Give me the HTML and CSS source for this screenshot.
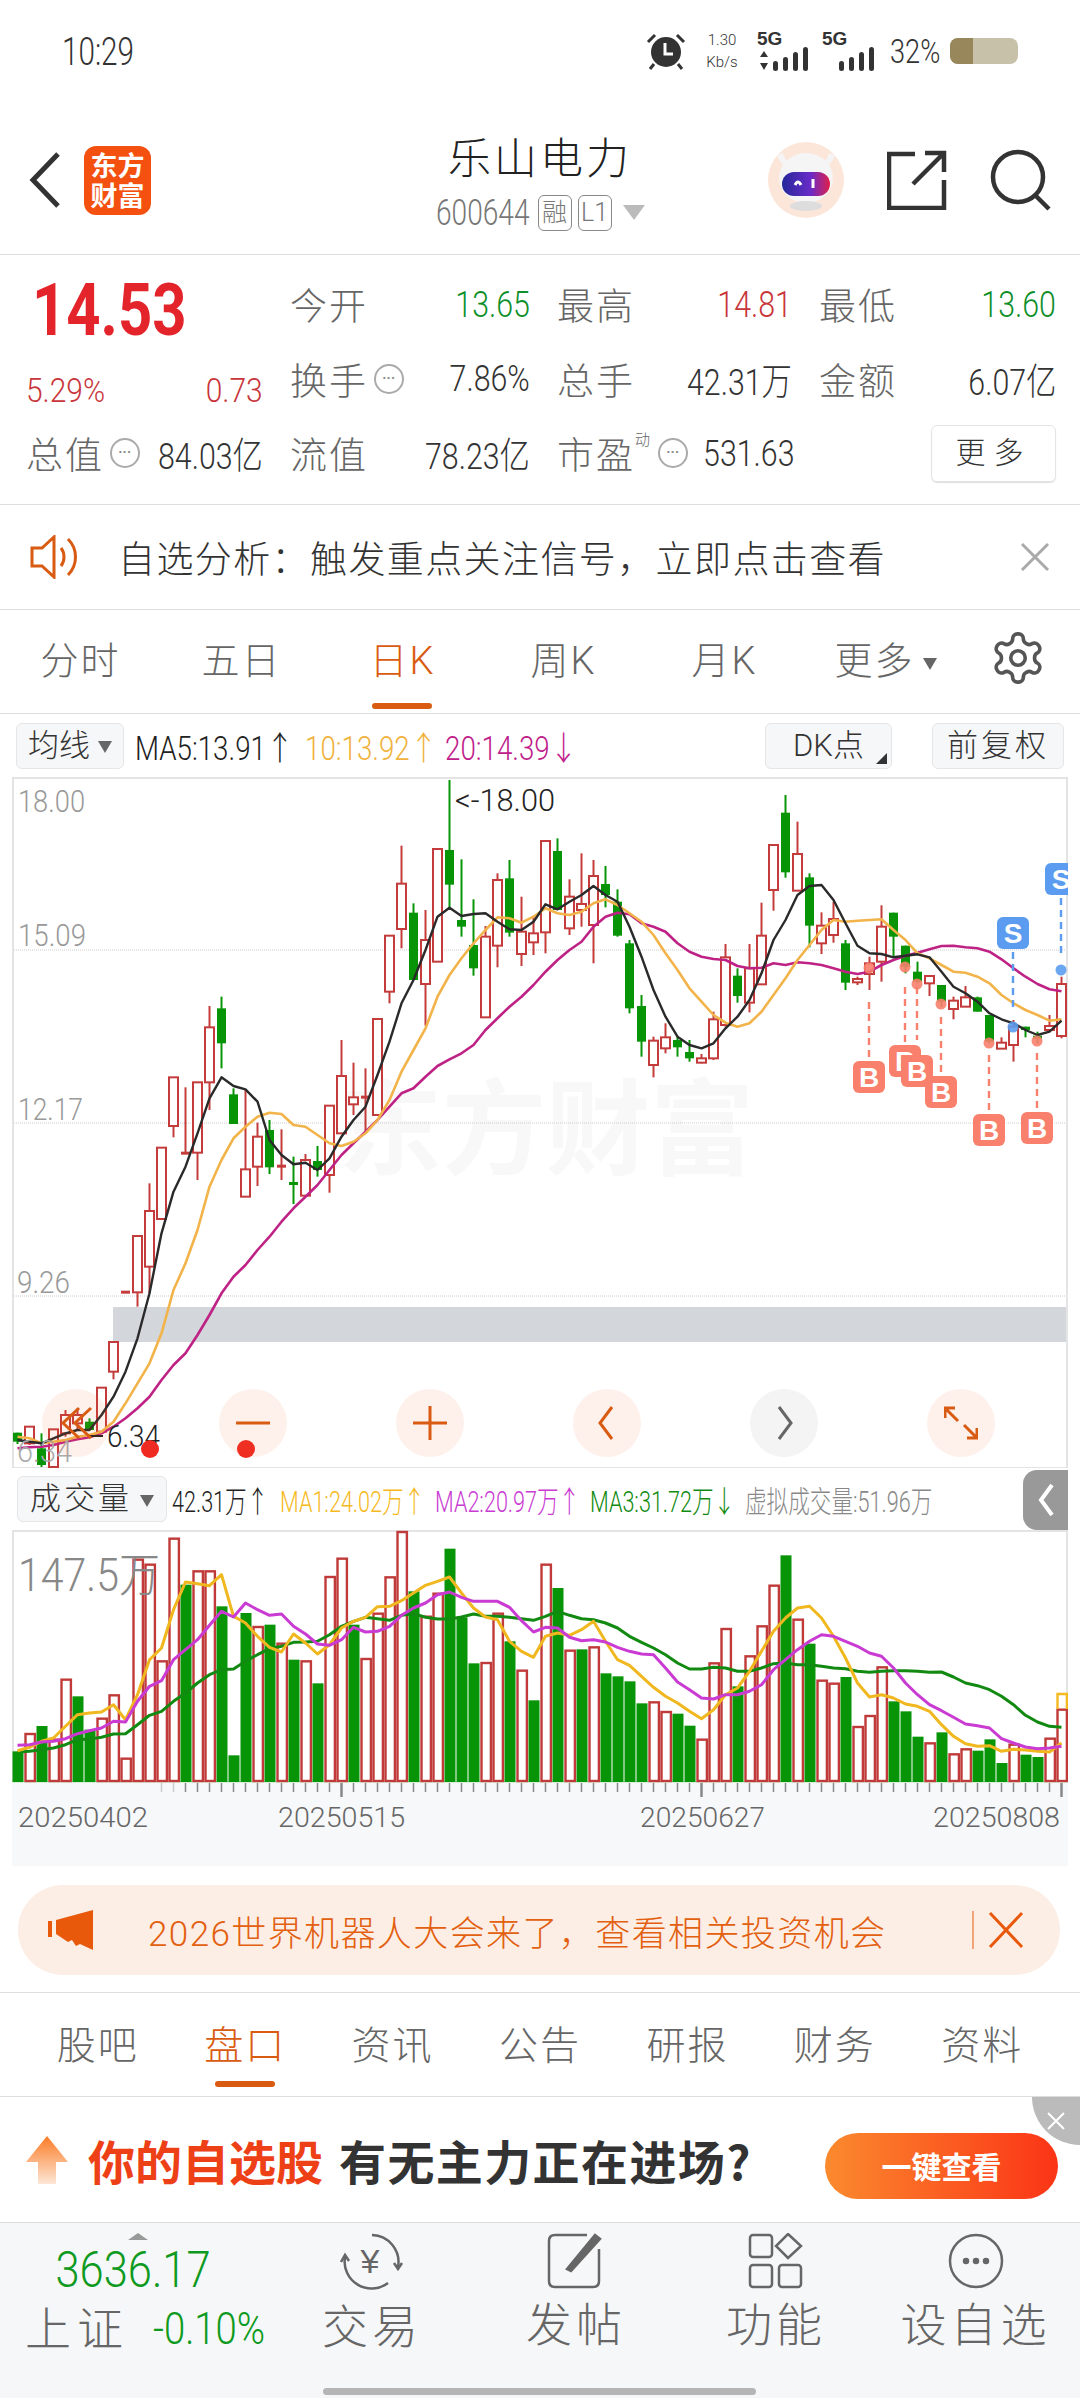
FILE: index.html
```html
<!DOCTYPE html>
<html>
<head>
    <title>乐山电力</title>
    <link rel="stylesheet" href="styles.css">
</head>
<body>
    <div class="status">
        <span class="clock">10:29</span>
        <div class="status-right">
            <svg class="alarm" width="40" height="38" viewBox="0 0 40 38">
                <path d="M2 10 L9 3 M38 10 L31 3" stroke="#333" stroke-width="3"/>
                <circle cx="20" cy="20" r="15" fill="#333"/>
                <path d="M19 11 V22 H27" stroke="#fff" stroke-width="3" fill="none"/>
                <path d="M8 32 L4 37 M32 32 L36 37" stroke="#333" stroke-width="3"/>
            </svg>
            <div class="speed"><span>1.30</span><span>Kb/s</span></div>
            <div class="net">
                <b>5G</b>
                <svg width="54" height="26" viewBox="0 0 54 26">
                    <path d="M5 5 L9 11 H1 Z M5 24 L1 17 H9 Z" fill="#333"/>
                    <rect x="14" y="15" width="5" height="10" rx="2.5" fill="#333"/>
                    <rect x="24" y="11" width="5" height="14" rx="2.5" fill="#333"/>
                    <rect x="34" y="6" width="5" height="19" rx="2.5" fill="#333"/>
                    <rect x="44" y="1" width="5" height="24" rx="2.5" fill="#333"/>
                </svg>
            </div>
            <div class="net net2">
                <b>5G</b>
                <svg width="42" height="26" viewBox="0 0 42 26">
                    <rect x="1" y="15" width="5" height="10" rx="2.5" fill="#333"/>
                    <rect x="11" y="11" width="5" height="14" rx="2.5" fill="#333"/>
                    <rect x="21" y="6" width="5" height="19" rx="2.5" fill="#333"/>
                    <rect x="31" y="1" width="5" height="24" rx="2.5" fill="#333"/>
                </svg>
            </div>
            <span class="batt-num">32%</span>
            <div class="battery"><div class="battery-fill"></div></div>
        </div>
    </div>

    <div class="header">
        <div class="header-left">
            <svg width="34" height="58" viewBox="0 0 34 58"><path d="M30 3 L5 29 L30 55" fill="none" stroke="#333" stroke-width="5"/></svg>
            <div class="logo">东方<br>财富</div>
        </div>
        <div class="header-mid">
            <div class="stock-name">乐山电力</div>
            <div class="stock-sub">
                <span class="stock-code">600644</span>
                <span class="chip">融</span>
                <span class="chip">L1</span>
                <span class="sub-arrow"></span>
            </div>
        </div>
        <div class="header-right">
            <svg class="avatar" width="76" height="76" viewBox="0 0 76 76">
                <circle cx="38" cy="38" r="38" fill="#fce6da"/>
                <path d="M12 12 C16 24 22 24 28 20 M64 12 C60 24 54 24 48 20" stroke="#f4f4f4" stroke-width="6" fill="none"/>
                <ellipse cx="38" cy="36" rx="27" ry="25" fill="#f5f5f5"/>
                <ellipse cx="38" cy="64" rx="16" ry="5" fill="#ddd"/>
                <rect x="14" y="30" width="48" height="24" rx="12" fill="url(#visor)"/>
                <path d="M27 43 q3 -6 6 0 M45 46 V37" stroke="#fff" stroke-width="3" fill="none"/>
                <defs><linearGradient id="visor"><stop offset="0" stop-color="#26289a"/><stop offset="0.6" stop-color="#6a2bc8"/><stop offset="1" stop-color="#e0204a"/></linearGradient></defs>
            </svg>
            <svg width="60" height="60" viewBox="0 0 60 60" fill="none" stroke="#333" stroke-width="4.5">
                <path d="M28 4 H2 V58 H57 V30"/>
                <path d="M26 34 L57 3 M38 3 H57 V22"/>
            </svg>
            <svg width="62" height="62" viewBox="0 0 62 62" fill="none" stroke="#333" stroke-width="4.5">
                <circle cx="28" cy="28" r="25"/>
                <path d="M45 46 L59 60"/>
            </svg>
        </div>
    </div>

    <div class="quote">
        <div class="price-box">
            <div class="price">14.53</div>
        </div>
        <div class="cell"><span class="label">今开</span><span class="val green">13.65</span></div>
        <div class="cell"><span class="label">最高</span><span class="val red">14.81</span></div>
        <div class="cell"><span class="label">最低</span><span class="val green">13.60</span></div>
        <div class="cell change"><span class="val">5.29%</span><span class="val">0.73</span></div>
        <div class="cell"><span class="label">换手<i class="dots">···</i></span><span class="val">7.86%</span></div>
        <div class="cell"><span class="label">总手</span><span class="val">42.31万</span></div>
        <div class="cell"><span class="label">金额</span><span class="val">6.07亿</span></div>
        <div class="cell"><span class="label">总值<i class="dots">···</i></span><span class="val">84.03亿</span></div>
        <div class="cell"><span class="label">流值</span><span class="val">78.23亿</span></div>
        <div class="cell cell-pe"><span class="label">市盈<sup class="dyn">动</sup><i class="dots">···</i></span><span class="val">531.63</span></div>
        <div class="cell more-cell"><span class="more">更多</span></div>
    </div>

    <div class="notice">
        <svg width="50" height="44" viewBox="0 0 50 44" fill="none" stroke="#d95b12" stroke-width="3">
            <path d="M2 13 H12 L24 2 V42 L12 31 H2 Z"/>
            <path d="M31 13 C35 18 35 26 31 31 M38 4 C48 14 48 30 38 40"/>
        </svg>
        <span class="notice-text">自选分析：触发重点关注信号，立即点击查看</span>
        <svg width="30" height="30" viewBox="0 0 30 30"><path d="M2 2 L28 28 M28 2 L2 28" stroke="#aaa" stroke-width="3"/></svg>
    </div>

    <div class="tabs">
        <span class="tab">分时</span>
        <span class="tab">五日</span>
        <span class="tab active">日K</span>
        <span class="tab">周K</span>
        <span class="tab">月K</span>
        <span class="tab">更多<i class="tri"></i></span>
        <svg class="gear" width="58" height="58" viewBox="0 0 24 24" fill="none" stroke="#555" stroke-width="1.5">
            <path d="M12.22 2h-.44a2 2 0 0 0-2 2v.18a2 2 0 0 1-1 1.73l-.43.25a2 2 0 0 1-2 0l-.15-.08a2 2 0 0 0-2.73.73l-.22.38a2 2 0 0 0 .73 2.73l.15.1a2 2 0 0 1 1 1.72v.51a2 2 0 0 1-1 1.74l-.15.09a2 2 0 0 0-.73 2.73l.22.38a2 2 0 0 0 2.73.73l.15-.08a2 2 0 0 1 2 0l.43.25a2 2 0 0 1 1 1.73V20a2 2 0 0 0 2 2h.44a2 2 0 0 0 2-2v-.18a2 2 0 0 1 1-1.73l.43-.25a2 2 0 0 1 2 0l.15.08a2 2 0 0 0 2.73-.73l.22-.39a2 2 0 0 0-.73-2.73l-.15-.08a2 2 0 0 1-1-1.74v-.5a2 2 0 0 1 1-1.74l.15-.09a2 2 0 0 0 .73-2.73l-.22-.38a2 2 0 0 0-2.73-.73l-.15.08a2 2 0 0 1-2 0l-.43-.25a2 2 0 0 1-1-1.73V4a2 2 0 0 0-2-2z"/>
            <circle cx="12" cy="12" r="3"/>
        </svg>
    </div>

    <div class="kbar">
        <span class="pick">均线<i class="tri"></i></span>
        <span class="ma ma5">MA5:13.91↑</span>
        <span class="ma ma10">10:13.92↑</span>
        <span class="ma ma20">20:14.39↓</span>
        <span class="pick dk">DK点<i class="corner"></i></span>
        <span class="pick fq">前复权</span>
    </div>

    <div class="chart">
        <div class="watermark">东方财富</div>
        <svg id="kline" class="kline" width="1056" height="691" viewBox="12 777 1056 691"></svg>
        <div class="float-row">
            <span class="fbtn"><svg width="34" height="34" viewBox="0 0 34 34" fill="none" stroke="#d95b12" stroke-width="3"><path d="M20 2 L4 17 L20 32 M32 2 L16 17 L32 32"/></svg></span>
            <span class="fbtn"><svg width="34" height="34" viewBox="0 0 34 34" stroke="#d95b12" stroke-width="3"><path d="M0 17 H34"/></svg></span>
            <span class="fbtn"><svg width="34" height="34" viewBox="0 0 34 34" stroke="#d95b12" stroke-width="3"><path d="M0 17 H34 M17 0 V34"/></svg></span>
            <span class="fbtn"><svg width="34" height="34" viewBox="0 0 34 34" fill="none" stroke="#d95b12" stroke-width="3"><path d="M22 1 L10 17 L22 33"/></svg></span>
            <span class="fbtn fbtn-off"><svg width="34" height="34" viewBox="0 0 34 34" fill="none" stroke="#666" stroke-width="3"><path d="M12 1 L24 17 L12 33"/></svg></span>
            <span class="fbtn"><svg width="34" height="34" viewBox="0 0 34 34" fill="none" stroke="#d95b12" stroke-width="3"><path d="M1 12 V2 H11 M2 3 L14 15 M33 22 V32 H23 M32 31 L20 19"/></svg></span>
        </div>
    </div>

    <div class="vbar">
        <span class="pick vpick">成交量<i class="tri"></i></span>
        <span class="ma vol0">42.31万↑</span>
        <span class="ma va1">MA1:24.02万↑</span>
        <span class="ma va2">MA2:20.97万↑</span>
        <span class="ma va3">MA3:31.72万↓</span>
        <span class="ma va4">虚拟成交量:51.96万</span>
        <span class="side-tab"><svg width="18" height="34" viewBox="0 0 18 34" fill="none" stroke="#fff" stroke-width="4"><path d="M15 2 L4 17 L15 32"/></svg></span>
    </div>

    <svg id="volume" class="volume" width="1056" height="336" viewBox="12 1532 1056 336"></svg>

    <div class="banner">
        <svg width="46" height="40" viewBox="0 0 46 40" fill="#e8590c">
            <rect x="0" y="11" width="4" height="16"/>
            <path d="M8 10 L45 0 V40 L32 34 L28 36 L24 30 L20 32 L8 24 Z"/>
        </svg>
        <span class="banner-text">2026世界机器人大会来了，查看相关投资机会</span>
        <svg class="banner-x" width="52" height="38" viewBox="0 0 52 38" stroke="#e8590c">
            <path d="M1 0 V38" stroke-width="1"/>
            <path d="M18 2 L50 36 M50 2 L18 36" stroke-width="3"/>
        </svg>
    </div>

    <div class="subtabs">
        <span class="subtab">股吧</span>
        <span class="subtab active">盘口</span>
        <span class="subtab">资讯</span>
        <span class="subtab">公告</span>
        <span class="subtab">研报</span>
        <span class="subtab">财务</span>
        <span class="subtab">资料</span>
    </div>

    <div class="ad">
        <svg width="42" height="48" viewBox="0 0 42 48">
            <defs><linearGradient id="up" x1="0" y1="0" x2="0" y2="1"><stop offset="0" stop-color="#fb7b25"/><stop offset="1" stop-color="#fde7d6"/></linearGradient></defs>
            <path d="M21 0 L42 26 H30 V48 H12 V26 H0 Z" fill="url(#up)"/>
        </svg>
        <span class="ad-red">你的自选股</span>
        <span class="ad-dark">有无主力正在进场?</span>
        <span class="ad-btn">一键查看</span>
        <span class="ad-close"><svg width="20" height="20" viewBox="0 0 20 20"><path d="M2 2 L18 18 M18 2 L2 18" stroke="#fff" stroke-width="2"/></svg></span>
    </div>

    <div class="nav">
        <div class="index">
            <i class="index-caret"></i>
            <div class="index-num">3636.17</div>
            <div class="index-row"><span>上证</span><b>-0.10%</b></div>
        </div>
        <div class="nav-item">
            <svg width="68" height="58" viewBox="0 0 68 58" fill="none" stroke="#666" stroke-width="2.5">
                <path d="M34 2 A27 27 0 0 1 60 34 M50 50 A27 27 0 0 1 7 24"/>
                <path d="M3 29 L7 22 L11 28 M56 30 L60 36 L64 30"/>
                <text x="34" y="40" class="yen">¥</text>
            </svg>
            <span>交易</span>
        </div>
        <div class="nav-item">
            <svg width="58" height="56" viewBox="0 0 58 56" fill="none" stroke="#666" stroke-width="2.5">
                <path d="M40 2 H8 Q2 2 2 8 V48 Q2 54 8 54 H46 Q52 54 52 48 V16"/>
                <path d="M20 36 L48 2 L53 6 L24 38 Z" fill="#666"/>
            </svg>
            <span>发帖</span>
        </div>
        <div class="nav-item">
            <svg width="56" height="56" viewBox="0 0 56 56" fill="none" stroke="#666" stroke-width="2.5">
                <rect x="2" y="2" width="22" height="22" rx="3"/>
                <path d="M40 1 L53 13 L40 25 L28 13 Z"/>
                <rect x="2" y="32" width="22" height="22" rx="3"/>
                <rect x="31" y="32" width="22" height="22" rx="3"/>
            </svg>
            <span>功能</span>
        </div>
        <div class="nav-item">
            <svg width="56" height="56" viewBox="0 0 56 56" fill="none" stroke="#666" stroke-width="2.5">
                <circle cx="28" cy="28" r="26"/>
                <circle cx="18" cy="28" r="2" fill="#666"/>
                <circle cx="28" cy="28" r="2" fill="#666"/>
                <circle cx="38" cy="28" r="2" fill="#666"/>
            </svg>
            <span>设自选</span>
        </div>
        <div class="home-pill"></div>
    </div>

    <script src="chart.js"></script>
</body>
</html>
```
FILE: styles.css
```css
body {
    margin: 0;
    width: 1080px;
    height: 2400px;
    overflow: hidden;
    background-color: #fff;
    color: #333;
    font-family: Roboto, "Noto Sans CJK SC", sans-serif;
    font-size: 37px;
    font-weight: 300;
}
i {
    font-style: normal;
}
.red { color: #c8353a; }
.green { color: #0e8f2a; }

/* status bar */
.status {
    height: 110px;
    display: flex;
    justify-content: space-between;
    align-items: center;
    padding: 0 62px;
    box-sizing: border-box;
}
.clock {
    font-size: 38px;
    margin-top: -6px;
    transform: scaleX(0.78);
    transform-origin: left center;
}
.status-right {
    display: flex;
    align-items: center;
    margin-top: -8px;
}
.speed {
    display: flex;
    flex-direction: column;
    gap: 4px;
    font-size: 15px;
    margin-left: 20px;
    width: 32px;
    text-align: center;
}
.net {
    margin-left: 21px;
    position: relative;
    width: 54px;
    height: 38px;
}
.net b {
    position: absolute;
    left: -2px;
    top: -4px;
    font-size: 19px;
    font-family: "Liberation Sans", sans-serif;
    font-weight: bold;
}
.net svg {
    position: absolute;
    left: 0;
    bottom: -2px;
}
.net2 {
    margin-left: 11px;
}
.net2 svg {
    left: 14px;
}
.batt-num {
    width: 50px;
    font-size: 34px;
    margin-left: 12px;
    white-space: nowrap;
    transform: scaleX(0.8);
    transform-origin: left center;
}
.battery {
    width: 68px;
    height: 26px;
    margin-left: 10px;
    border-radius: 8px;
    background-color: #c8c1aa;
    overflow: hidden;
}
.battery-fill {
    width: 23px;
    height: 100%;
    background-color: #98875a;
}

/* header */
.header {
    height: 145px;
    display: grid;
    grid-template-columns: 1fr auto 1fr;
    align-items: center;
    padding: 0 28px;
    border-bottom: 1px solid #ddd;
    box-sizing: border-box;
}
.header-left {
    display: flex;
    align-items: center;
    gap: 22px;
    margin-top: -4px;
}
.logo {
    width: 67px;
    height: 69px;
    border-radius: 12px;
    background-color: #f4500f;
    color: #fff;
    font-family: "Noto Sans CJK SC", sans-serif;
    font-weight: bold;
    font-size: 27px;
    line-height: 30px;
    text-align: center;
    padding-top: 4px;
    box-sizing: border-box;
}
.header-mid {
    display: flex;
    flex-direction: column;
    align-items: center;
    gap: 11px;
}
.stock-name {
    font-size: 43px;
    line-height: 50px;
    letter-spacing: 3px;
    color: #222;
}
.stock-sub {
    display: flex;
    align-items: center;
    gap: 6px;
    color: #777;
    font-size: 36px;
    line-height: 36px;
}
.stock-code {
    width: 96px;
    transform: scaleX(0.78);
    transform-origin: left center;
}
.chip {
    width: 32px;
    height: 34px;
    border: 1px solid #888;
    border-radius: 6px;
    font-size: 25px;
    line-height: 33px;
    text-align: center;
}
.sub-arrow {
    width: 0;
    height: 0;
    margin-left: 5px;
    border-left: 11px solid transparent;
    border-right: 11px solid transparent;
    border-top: 15px solid #bbb;
}
.header-right {
    display: flex;
    justify-content: flex-end;
    align-items: center;
    gap: 43px;
    margin-top: -4px;
}

/* quote grid */
.quote {
    height: 250px;
    display: grid;
    grid-template-columns: 237px 240px 235px 237px;
    grid-auto-rows: 74.5px;
    column-gap: 27px;
    padding: 12px 24px 0 26px;
    border-bottom: 1px solid #ddd;
    box-sizing: border-box;
    color: #333;
}
.price-box {
    display: flex;
    align-items: center;
}
.price {
    font-size: 72px;
    font-weight: bold;
    color: #e3242b;
    margin-top: 12px;
    margin-left: 6px;
    transform: scaleX(0.83);
    transform-origin: left center;
}
.cell {
    display: flex;
    justify-content: space-between;
    align-items: center;
    white-space: nowrap;
}
.val {
    flex: none;
    margin-left: -40px;
    transform: scaleX(0.82);
    transform-origin: right center;
}
.label {
    flex: none;
    display: flex;
    align-items: center;
    color: #666;
    font-size: 37px;
    letter-spacing: 2px;
}
.change {
    color: #c8353a;
    font-size: 34px;
    align-items: flex-end;
    padding-bottom: 6px;
    box-sizing: border-box;
}
.change .val {
    margin-left: 0;
    transform: scaleX(0.88);
}
.change .val:first-child {
    transform-origin: left center;
}
.cell-pe .val {
    margin-right: -2px;
}
.dots {
    flex: none;
    width: 26px;
    height: 26px;
    margin-left: 6px;
    border: 2px solid #aaa;
    border-radius: 50%;
    color: #888;
    font-size: 13px;
    line-height: 24px;
    letter-spacing: 0;
    text-align: center;
    font-family: "Liberation Sans", sans-serif;
    font-weight: bold;
}
.dyn {
    font-size: 15px;
    line-height: 1;
    margin-bottom: 26px;
}
.more-cell {
    justify-content: flex-end;
}
.more {
    width: 123px;
    height: 55px;
    border: 1px solid #e4e4e4;
    border-radius: 6px;
    box-shadow: 0 1px 1px #ddd;
    text-align: center;
    font-size: 30px;
    line-height: 53px;
    letter-spacing: 8px;
}

/* notice row */
.notice {
    height: 105px;
    display: flex;
    align-items: center;
    padding: 0 30px;
    border-bottom: 1px solid #ddd;
    box-sizing: border-box;
}
.notice-text {
    flex: 1;
    margin-left: 38px;
    font-size: 37px;
    letter-spacing: 1.4px;
    color: #333;
}

/* period tabs */
.tabs {
    height: 104px;
    display: grid;
    grid-template-columns: repeat(6, 161px) 1fr;
    align-items: center;
    border-bottom: 1px solid #ddd;
    box-sizing: border-box;
    color: #666;
}
.tab {
    position: relative;
    text-align: center;
    font-size: 38px;
    letter-spacing: 2px;
    margin-top: -8px;
}
.tab.active {
    color: #d95b12;
}
.tab.active::after {
    content: "";
    position: absolute;
    left: 50px;
    bottom: -24px;
    width: 60px;
    height: 6px;
    border-radius: 3px;
    background-color: #d95b12;
}
.tri {
    display: inline-block;
    width: 0;
    height: 0;
    margin-left: 8px;
    vertical-align: middle;
    border-left: 7px solid transparent;
    border-right: 7px solid transparent;
    border-top: 12px solid #666;
}
.gear {
    margin-left: 23px;
    margin-top: -8px;
}

/* ma toolbars */
.kbar {
    height: 63px;
    display: flex;
    align-items: center;
    padding: 0 16px;
    box-sizing: border-box;
}
.pick {
    flex: none;
    box-sizing: border-box;
    height: 46px;
    border: 1px solid #e6e6e6;
    border-radius: 6px;
    background-color: #f6f7f9;
    color: #333;
    font-size: 31px;
    line-height: 44px;
    text-align: center;
}
.kbar .pick:first-child {
    width: 108px;
}
.ma {
    flex: none;
    font-size: 33px;
    white-space: nowrap;
    transform: scaleX(0.84);
    transform-origin: left center;
}
.ma5 { color: #222; width: 170px; margin-left: 11px; }
.ma10 { color: #f0b23c; width: 140px; }
.ma20 { color: #c0208a; width: 140px; }
.dk {
    position: relative;
    width: 127px;
    margin-left: auto;
}
.corner {
    position: absolute;
    right: 4px;
    bottom: 4px;
    border-left: 11px solid transparent;
    border-bottom: 11px solid #333;
}
.fq {
    width: 132px;
    margin-left: 40px;
    letter-spacing: 3px;
}

/* kline */
.chart {
    position: relative;
    width: 1056px;
    height: 692px;
    margin-left: 12px;
}
.kline {
    display: block;
    position: relative;
}
.watermark {
    position: absolute;
    left: 326px;
    top: 285px;
    font-family: "Noto Sans CJK SC", sans-serif;
    font-size: 104px;
    font-weight: bold;
    line-height: 120px;
    color: #f8f8f8;
}
.float-row {
    position: absolute;
    left: 30px;
    top: 612px;
    display: flex;
    gap: 109px;
}
.fbtn {
    width: 68px;
    height: 68px;
    border-radius: 50%;
    background-color: rgba(240, 100, 30, 0.09);
    display: flex;
    align-items: center;
    justify-content: center;
}
.fbtn-off {
    background-color: #f4f4f4;
}
.kline .axis { font-size: 32px; fill: #999; }
.kline .axis-low { fill: #aaa; }
.kline .note { font-size: 32px; fill: #222; }
.tag {
    font-family: "Liberation Sans", sans-serif;
    font-size: 28px;
    font-weight: bold;
    fill: #fff;
    text-anchor: middle;
}

/* volume */
.vbar {
    position: relative;
    height: 62px;
    display: flex;
    align-items: center;
    padding: 0 0 0 17px;
    box-sizing: border-box;
    margin-top: -1px;
}
.vbar .ma {
    font-size: 30px;
    transform: scaleX(0.72);
}
.vpick {
    width: 150px;
    letter-spacing: 3px;
}
.vol0 { color: #222; width: 108px; margin-left: 5px; }
.va1 { color: #f5b921; width: 155px; }
.va2 { color: #c93bd2; width: 155px; }
.va3 { color: #108a10; width: 155px; }
.va4 { color: #888; width: 200px; }
.side-tab {
    position: absolute;
    right: 12px;
    top: 2px;
    width: 45px;
    height: 60px;
    border-radius: 14px 0 0 14px;
    background-color: #999;
    display: flex;
    align-items: center;
    justify-content: center;
}
.volume {
    display: block;
    margin-left: 12px;
}
.volume .vlabel { font-size: 46px; fill: #888; }
.volume .date { font-size: 28px; fill: #666; }

/* orange banner */
.banner {
    height: 90px;
    margin: 19px 20px 17px 18px;
    padding: 0 30px;
    border-radius: 45px;
    background-color: #fdeee5;
    display: flex;
    align-items: center;
    box-sizing: border-box;
}
.banner-text {
    flex: 1;
    margin-left: 54px;
    font-size: 35px;
    letter-spacing: 1.4px;
    color: #e2600f;
    white-space: nowrap;
}
.banner-x {
    margin-right: 6px;
}

/* detail tabs */
.subtabs {
    height: 105px;
    display: grid;
    grid-template-columns: repeat(7, 1fr);
    align-items: center;
    padding: 0 24px;
    border-top: 1px solid #ddd;
    border-bottom: 1px solid #ddd;
    box-sizing: border-box;
    color: #666;
}
.subtab {
    position: relative;
    text-align: center;
    font-size: 39px;
    letter-spacing: 2px;
    margin-top: -6px;
}
.subtab.active {
    color: #d95b12;
}
.subtab.active::after {
    content: "";
    position: absolute;
    left: 44px;
    bottom: -17px;
    width: 60px;
    height: 6px;
    border-radius: 3px;
    background-color: #d95b12;
}

/* ad strip */
.ad {
    position: relative;
    height: 126px;
    display: flex;
    align-items: center;
    padding-left: 26px;
    border-bottom: 1px solid #ddd;
    box-sizing: border-box;
    font-family: "Noto Sans CJK SC", sans-serif;
    font-size: 47px;
    font-weight: bold;
}
.ad-red {
    margin-left: 20px;
    color: #ee4016;
}
.ad-dark {
    margin-left: 16px;
    color: #333;
    letter-spacing: 1.4px;
}
.ad-btn {
    position: absolute;
    right: 22px;
    top: 36px;
    width: 233px;
    height: 66px;
    border-radius: 33px;
    background: linear-gradient(90deg, #fb8a2e, #fb3416);
    color: #fff;
    font-size: 30px;
    line-height: 64px;
    text-align: center;
}
.ad-close {
    position: absolute;
    right: 0;
    top: 0;
    width: 48px;
    height: 48px;
    border-radius: 0 0 0 48px;
    background-color: #bbb;
    display: flex;
    align-items: center;
    justify-content: center;
}

/* bottom nav */
.nav {
    position: relative;
    height: 175px;
    background-color: #f6f7f9;
    display: grid;
    grid-template-columns: 273px 198px 210px 190px 1fr;
    align-items: start;
    color: #666;
}
.index {
    position: relative;
    padding-left: 25px;
    padding-top: 22px;
}
.index-caret {
    position: absolute;
    left: 128px;
    top: 10px;
    border-left: 10px solid transparent;
    border-right: 10px solid transparent;
    border-bottom: 7px solid #999;
}
.index-num {
    padding-left: 35px;
    font-size: 50px;
    line-height: 50px;
    color: #0e9a20;
    white-space: nowrap;
    transform: scaleX(0.87);
    transform-origin: left center;
}
.index-row {
    display: flex;
    align-items: center;
    margin-top: 8px;
    font-size: 46px;
    line-height: 52px;
    white-space: nowrap;
}
.index-row span {
    letter-spacing: 6px;
}
.index-row b {
    margin-left: 24px;
    font-weight: 300;
    font-size: 44px;
    color: #0e9a20;
    transform: scaleX(0.87);
    transform-origin: left center;
}
.nav-item {
    display: flex;
    flex-direction: column;
    align-items: center;
    padding-top: 10px;
    gap: 6px;
    font-size: 46px;
    line-height: 60px;
    letter-spacing: 4px;
    white-space: nowrap;
}
.yen {
    font-family: "Liberation Sans", sans-serif;
    font-size: 34px;
    fill: #666;
    stroke: none;
    text-anchor: middle;
}
.home-pill {
    position: absolute;
    left: 323px;
    top: 165px;
    width: 433px;
    height: 7px;
    border-radius: 4px;
    background-color: #b5b5b5;
}
```
FILE: chart.js
```js
// y values are thirds of a pixel, measured down from the top of each panel
var RED = '#c43b3b', GREEN = '#079507';
var NS = 'http://www.w3.org/2000/svg';

// [up, bodyTop, bodyBottom, high, low]
var candles = [
    [0,1958,1985,1958,1992],[1,1940,1990,1940,1995],[0,2005,2055,1960,2065],[1,1948,2065,1948,2065],
    [1,1905,1960,1890,1970],[1,1905,1930,1885,1950],[0,1925,1950,1915,1950],[1,1823,1955,1823,1960],
    [1,1686,1775,1686,1798],[1,1535,1535,1535,1535],[1,1368,1537,1368,1580],[1,1293,1460,1210,1540],
    [1,1103,1317,1103,1317],[1,892,1038,892,1072],[1,1118,1118,922,1118],[1,907,1118,907,1200],
    [1,742,907,678,990],[0,685,790,650,865],[0,943,1032,925,1032],[1,1168,1250,930,1250],
    [1,1070,1160,1028,1218],[0,1050,1162,1020,1182],[1,1157,1157,1048,1200],[0,1209,1209,1130,1272],
    [1,1140,1247,1122,1247],[0,1143,1170,1098,1190],[1,977,1185,977,1238],[1,888,1060,780,1060],
    [1,952,973,848,1005],[1,950,955,865,1060],[1,717,1005,717,1005],[1,467,635,467,670],
    [1,311,447,197,505],[0,398,600,370,600],[1,480,612,390,737],[1,207,545,207,545],
    [0,210,314,0,385],[0,420,440,238,470],[0,495,565,358,587],[1,470,712,438,712],
    [1,300,497,280,562],[0,295,458,240,470],[1,455,522,350,558],[1,460,487,410,525],
    [1,183,457,183,520],[0,213,390,175,390],[1,350,445,298,465],[1,372,390,220,440],
    [1,288,435,240,550],[0,312,345,258,382],[0,365,467,328,470],[0,490,685,480,700],
    [0,678,785,645,830],[1,782,855,770,892],[1,772,805,730,820],[0,780,802,770,830],
    [0,816,835,780,845],[1,835,848,822,850],[1,718,835,695,840],[1,532,735,492,740],
    [0,587,648,565,668],[1,565,668,492,697],[1,467,613,368,613],[1,195,330,195,392],
    [0,98,277,45,293],[1,222,332,125,332],[0,292,437,280,502],[1,437,490,397,522],
    [1,417,465,365,488],[0,490,608,480,630],[1,597,607,590,615],[1,550,582,530,630],
    [1,440,545,376,605],[0,398,470,398,530],[0,497,560,497,580],[0,575,605,545,610],
    [1,588,610,588,648],[0,615,665,615,680],[1,662,687,650,718],[1,652,680,618,680],
    [0,652,695,650,695],[0,705,785,705,790],[1,788,806,772,806],[1,740,795,720,845],
    [0,740,750,740,772],[0,770,775,755,790],[1,738,750,705,750],[1,612,768,590,775]
];

var ma5 = [1980,1985,1990,1975,1960,1950,1950,1905,1850,1775,1675,1540,1360,1235,1160,1060,955,892,918,928,965,1080,1125,1153,1148,1170,1135,1070,1020,980,885,785,670,600,510,410,383,408,402,400,425,448,450,425,373,388,365,345,318,345,365,440,530,630,710,770,795,805,790,745,710,660,580,480,420,345,318,315,360,430,497,520,522,532,527,523,532,575,620,640,665,700,718,730,750,765,755,722];
var ma10 = [1970,1975,1990,1985,1980,1970,1965,1955,1925,1870,1810,1750,1660,1530,1450,1350,1220,1140,1075,1040,1010,998,1002,1035,1040,1065,1090,1098,1085,1060,1020,960,875,810,745,650,585,535,490,450,412,415,428,410,385,400,405,395,370,358,375,400,425,465,520,570,625,665,705,728,740,730,695,645,595,540,495,450,420,425,422,420,418,450,480,520,535,555,575,578,590,610,645,670,690,705,722,718];
var ma20 = [2005,2002,2000,1995,1985,1978,1972,1960,1940,1915,1885,1850,1800,1755,1720,1665,1605,1540,1490,1455,1410,1370,1325,1285,1250,1215,1170,1125,1090,1055,1020,980,940,925,890,858,838,820,795,750,715,680,650,615,575,540,510,485,440,410,398,403,430,440,455,490,515,530,537,540,558,565,563,550,555,547,550,555,565,575,582,575,555,540,527,518,508,498,497,502,505,515,538,565,590,612,628,634];

// [up, top]
var bars = [
    [0,670],[1,618],[0,594],[1,635],[1,455],[0,505],[0,605],[1,572],[1,502],[1,692],[1,95],[1,110],
    [1,400],[1,32],[0,170],[1,130],[1,130],[0,235],[0,682],[0,255],[1,297],[0,290],[1,347],[0,395],
    [1,400],[0,466],[1,147],[1,92],[0,290],[1,393],[1,257],[1,148],[1,12],[0,190],[1,266],[1,197],
    [0,62],[0,268],[0,406],[1,405],[1,257],[0,340],[1,428],[0,517],[1,110],[0,180],[1,368],[0,364],
    [1,358],[0,436],[0,445],[0,460],[0,526],[1,523],[1,552],[0,557],[0,593],[1,635],[1,406],[1,303],
    [0,475],[1,385],[1,295],[1,173],[0,82],[1,275],[0,347],[1,458],[1,467],[0,447],[1,597],[1,564],
    [1,418],[0,520],[0,550],[0,626],[1,646],[0,613],[1,679],[1,664],[0,668],[0,634],[0,705],[1,650],
    [0,680],[0,687],[1,632],[1,545]
];

var vma1 = [668,658,640,630,595,560,555,552,530,575,500,395,360,245,162,167,173,140,265,285,325,358,372,318,345,378,350,300,280,268,236,235,218,195,172,160,147,195,240,267,275,340,370,388,325,315,322,305,280,340,395,412,445,478,505,525,550,572,545,500,480,430,370,310,270,240,235,270,325,390,465,507,500,510,528,535,550,590,625,647,655,653,670,664,666,670,672,645];
var vma2 = [652,650,642,640,632,617,608,600,580,582,520,475,458,395,365,335,292,250,267,225,245,262,258,295,318,348,352,335,298,312,310,295,262,240,225,200,192,208,220,220,220,238,278,312,298,300,328,338,335,342,358,370,378,380,420,462,485,510,513,500,500,490,470,425,395,365,340,320,325,340,355,375,385,420,465,500,530,548,568,588,593,600,632,645,657,662,660,655];
var vma3 = [672,670,665,660,650,635,633,628,618,617,590,562,550,520,495,465,440,425,423,400,380,362,355,343,342,340,320,295,280,268,272,277,262,257,268,273,273,267,258,265,265,268,272,277,265,250,262,272,275,285,300,325,343,360,380,405,423,423,418,420,430,430,420,407,405,410,410,415,420,422,430,433,430,428,428,430,433,432,447,465,473,485,505,530,562,582,595,598];

function el(parent, name, attrs, text) {
    var node = document.createElementNS(NS, name);
    for (var k in attrs) node.setAttribute(k, attrs[k]);
    if (text) node.textContent = text;
    parent.appendChild(node);
    return node;
}

function cx(i) {
    return 17.5 + 12 * i;
}

function line(svg, data, origin, color, width) {
    var pts = data.map(function (v, i) {
        return cx(i) + ',' + (origin + v / 3).toFixed(1);
    }).join(' ');
    el(svg, 'polyline', { points: pts, fill: 'none', stroke: color, 'stroke-width': width, 'stroke-linejoin': 'round' });
}

// the reference's digits are tall and narrow, so every label gets a fixed width
function label(svg, x, y, cls, width, text) {
    el(svg, 'text', { x: x, y: y, 'class': cls, textLength: width, lengthAdjust: 'spacingAndGlyphs' }, text);
}

function drawKline() {
    var svg = document.getElementById('kline');
    var top = 780;

    el(svg, 'rect', { x: 113, y: 1307, width: 955, height: 35, fill: '#d3d6da' });
    [950, 1123, 1296].forEach(function (y) {
        el(svg, 'line', { x1: 12, x2: 1068, y1: y, y2: y, stroke: '#ccc', 'stroke-dasharray': '1 1' });
    });
    el(svg, 'rect', { x: 13, y: 778, width: 1054, height: 690, fill: 'none', stroke: '#e4e4e4', 'stroke-width': 2 });

    candles.forEach(function (c, i) {
        var color = c[0] ? RED : GREEN;
        var x = cx(i);
        var h = (c[2] - c[1]) / 3;
        el(svg, 'line', { x1: x, x2: x, y1: top + c[3] / 3, y2: Math.min(top + c[4] / 3, 1467), stroke: color, 'stroke-width': 2 });
        if (c[0] && h > 3) {
            el(svg, 'rect', { x: x - 4.5, y: top + c[1] / 3, width: 9, height: Math.min(h, 1467 - top - c[1] / 3), fill: '#fff', stroke: color, 'stroke-width': 2 });
        } else {
            el(svg, 'rect', { x: x - 4.5, y: top + c[1] / 3 - (h < 3 ? 1 : 0), width: 9, height: Math.max(h, 3), fill: color });
        }
    });

    line(svg, ma20, top, '#bf2285', 2.6);
    line(svg, ma10, top, '#f2b44a', 2.6);
    line(svg, ma5, top, '#2a2a2a', 2.4);

    label(svg, 18, 812, 'axis', 67, '18.00');
    label(svg, 18, 946, 'axis', 68, '15.09');
    label(svg, 18, 1120, 'axis', 65, '12.17');
    label(svg, 17, 1293, 'axis', 53, '9.26');
    label(svg, 17, 1462, 'axis axis-low', 55, '6.34');
    label(svg, 455, 811, 'note', 100, '<-18.00');
    label(svg, 107, 1447, 'note', 53, '6.34');
    el(svg, 'line', { x1: 90, x2: 103, y1: 1436, y2: 1436, stroke: '#222', 'stroke-width': 2 });

    // buy and sell marks: [x, tag top, dash start, dash end, dot y]
    var buys = [[869, 1061, 1002, 1058, 968], [905, 1045, 987, 1042, 967], [917, 1055, 987, 1040, 984], [941, 1076, 1017, 1073, 1004], [989, 1114, 1055, 1110, 1043], [1037, 1112, 1053, 1110, 1041]];
    var sells = [[1013, 917, 952, 1007, 1027], [1061, 863, 898, 953, 970]];
    function mark(list, color, letter) {
        list.forEach(function (m) {
            el(svg, 'circle', { cx: m[0], cy: m[4], r: 5.5, fill: color, opacity: 0.9 });
            el(svg, 'line', { x1: m[0], x2: m[0], y1: m[2], y2: m[3], stroke: color, 'stroke-width': 2.4, 'stroke-dasharray': '7 5' });
            el(svg, 'rect', { x: m[0] - 16, y: m[1], width: 32, height: 32, rx: 6, fill: color });
            el(svg, 'text', { x: m[0], y: m[1] + 26, 'class': 'tag' }, letter);
        });
    }
    mark(buys, '#f8806c', 'B');
    mark(sells, '#5b9cf0', 'S');

    el(svg, 'circle', { cx: 150, cy: 1449, r: 9, fill: '#ee2a22' });
    el(svg, 'circle', { cx: 246, cy: 1449, r: 9, fill: '#ee2a22' });
}

function drawVolume() {
    var svg = document.getElementById('volume');
    var top = 1530;
    var base = 1783;

    el(svg, 'rect', { x: 13, y: 1533, width: 1054, height: 251, fill: 'none', stroke: '#e4e4e4', 'stroke-width': 2 });
    el(svg, 'rect', { x: 12, y: 1784, width: 1056, height: 84, fill: '#f7f8fa' });
    el(svg, 'line', { x1: 12, x2: 1068, y1: 1784, y2: 1784, stroke: '#cdeccd', 'stroke-width': 1.5 });

    bars.forEach(function (b, i) {
        var x = 12.5 + 12 * i;
        var y = top + b[1] / 3;
        if (b[0]) {
            el(svg, 'rect', { x: x + 1, y: y, width: 9.4, height: base - y, fill: '#fff', stroke: '#c03a3a', 'stroke-width': 2.4 });
        } else {
            el(svg, 'rect', { x: x, y: y, width: 11, height: base - y + 1, fill: GREEN });
        }
    });
    var last = 12.5 + 12 * 87 + 1;
    el(svg, 'path', { d: 'M' + last + ' 1711 V1696 H' + (last + 9.4) + ' V1711', fill: 'none', stroke: '#f5b921', 'stroke-width': 2.4 });

    line(svg, vma3, top, '#128a12', 3);
    line(svg, vma1, top, '#f0b81e', 3);
    line(svg, vma2, top, '#c93bd2', 3);

    bars.forEach(function (b, i) {
        if (i < 12) return;
        var big = i === 27 || i === 57 || i === 87;
        el(svg, 'line', {
            x1: cx(i), x2: cx(i), y1: 1785, y2: big ? 1799 : 1794,
            stroke: i < 14 ? '#ccc' : '#888', 'stroke-width': big ? 2.5 : 1.5
        });
    });

    label(svg, 18, 1593, 'vlabel', 142, '147.5万');
    label(svg, 18, 1829, 'date', 130, '20250402');
    label(svg, 278, 1829, 'date', 127, '20250515');
    label(svg, 640, 1829, 'date', 125, '20250627');
    label(svg, 933, 1829, 'date', 127, '20250808');
}

drawKline();
drawVolume();
```
